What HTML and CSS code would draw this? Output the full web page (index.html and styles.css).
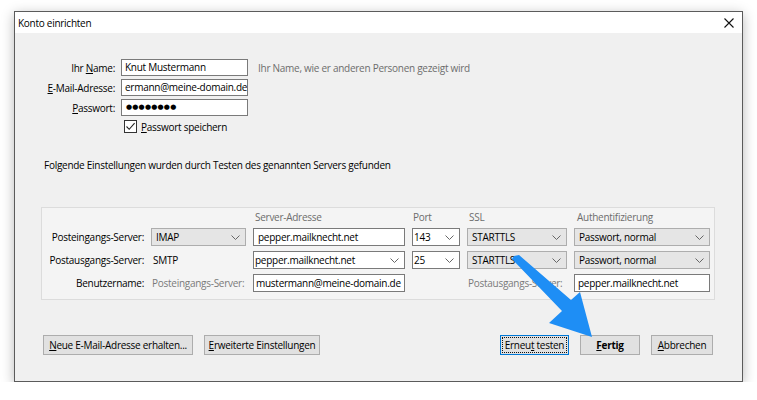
FILE: index.html
```html
<!DOCTYPE html>
<html lang="de">
<head>
  <meta charset="UTF-8">
  <title>Konto einrichten</title>
  <link rel="stylesheet" href="styles.css">
</head>
<body>

<div class="dialog">
  <div class="titlebar">
    <span class="title">Konto einrichten</span>
    <svg class="close" width="10" height="10" viewBox="0 0 10 10"><path d="M0.5 0.5 L9.5 9.5 M9.5 0.5 L0.5 9.5" stroke="#111" stroke-width="1.1" fill="none"/></svg>
  </div>

  <div class="content">
    <!-- Konto-Daten -->
    <div class="account">
      <span class="lbl">Ihr <u>N</u>ame:</span>
      <div class="field">Knut Mustermann</div>
      <span class="hint">Ihr Name, wie er anderen Personen gezeigt wird</span>

      <span class="lbl"><u>E</u>-Mail-Adresse:</span>
      <div class="field">ermann@meine-domain.de</div>
      <span></span>

      <span class="lbl"><u>P</u>asswort:</span>
      <div class="field pass">●●●●●●●●</div>
      <span></span>

      <div class="remember">
        <span class="checkbox"><svg width="11" height="11" viewBox="0 0 11 11"><path d="M1.5 5.5 L4.2 8.3 L9.6 2.2" stroke="#222" stroke-width="1.1" fill="none"/></svg></span>
        <span><u>P</u>asswort speichern</span>
      </div>
    </div>

    <p class="found">Folgende Einstellungen wurden durch Testen des genannten Servers gefunden</p>

    <!-- Server-Einstellungen -->
    <div class="servers">
      <span></span>
      <span></span>
      <span class="head">Server-Adresse</span>
      <span class="head port-head">Port</span>
      <span class="head">SSL</span>
      <span class="head auth-head">Authentifizierung</span>

      <span class="lbl">Posteingangs-Server:</span>
      <div class="select">IMAP<svg class="chev" width="9" height="5" viewBox="0 0 9 5"><path d="M0.5 0.5 L4.5 4.5 L8.5 0.5" stroke="#666" fill="none"/></svg></div>
      <div class="field wide">pepper.mailknecht.net</div>
      <div class="combo">143<svg class="chev" width="9" height="5" viewBox="0 0 9 5"><path d="M0.5 0.5 L4.5 4.5 L8.5 0.5" stroke="#666" fill="none"/></svg></div>
      <div class="select">STARTTLS<svg class="chev" width="9" height="5" viewBox="0 0 9 5"><path d="M0.5 0.5 L4.5 4.5 L8.5 0.5" stroke="#666" fill="none"/></svg></div>
      <div class="select">Passwort, normal<svg class="chev" width="9" height="5" viewBox="0 0 9 5"><path d="M0.5 0.5 L4.5 4.5 L8.5 0.5" stroke="#666" fill="none"/></svg></div>

      <span class="lbl">Postausgangs-Server:</span>
      <span class="plain">SMTP</span>
      <div class="combo">pepper.mailknecht.net<svg class="chev" width="9" height="5" viewBox="0 0 9 5"><path d="M0.5 0.5 L4.5 4.5 L8.5 0.5" stroke="#666" fill="none"/></svg></div>
      <div class="combo">25<svg class="chev" width="9" height="5" viewBox="0 0 9 5"><path d="M0.5 0.5 L4.5 4.5 L8.5 0.5" stroke="#666" fill="none"/></svg></div>
      <div class="select">STARTTLS<svg class="chev" width="9" height="5" viewBox="0 0 9 5"><path d="M0.5 0.5 L4.5 4.5 L8.5 0.5" stroke="#666" fill="none"/></svg></div>
      <div class="select">Passwort, normal<svg class="chev" width="9" height="5" viewBox="0 0 9 5"><path d="M0.5 0.5 L4.5 4.5 L8.5 0.5" stroke="#666" fill="none"/></svg></div>

      <span class="lbl">Benutzername:</span>
      <span class="muted">Posteingangs-Server:</span>
      <div class="field user">mustermann@meine-domain.de</div>
      <span></span>
      <span class="muted">Postausgangs-Server:</span>
      <div class="field">pepper.mailknecht.net</div>
    </div>

    <div class="actions">
      <div class="group">
        <button class="btn btn-new"><u>N</u>eue E-Mail-Adresse erhalten...</button>
        <button class="btn btn-adv"><u>E</u>rweiterte Einstellungen</button>
      </div>
      <div class="group">
        <button class="btn btn-retest">Erneu<u>t</u> testen</button>
        <button class="btn btn-done"><u>F</u>ertig</button>
        <button class="btn btn-cancel"><u>A</u>bbrechen</button>
      </div>
    </div>
  </div>
</div>

<!-- Hinweispfeil -->
<svg class="arrow" width="757" height="400" viewBox="0 0 757 400">
  <polygon points="514,256 519,255 571,300 580,292 592,337 549,323 562,311 512,259" fill="#1e8ef5"/>
</svg>

</body>
</html>
```

FILE: styles.css
```css
body {
  margin: 0;
  background-color: #fff;
  font-family: "Open Sans", sans-serif;
  font-size: 10px;
  letter-spacing: -0.27px;
  color: #000;
}

.dialog {
  margin: 11px 0 0 14px;
  width: 727px;
  border: 1px solid #5b5b5b;
  background-color: #f0f0f0;
  box-shadow: 0 3px 12px rgba(0,0,0,0.28);
}

.titlebar {
  height: 21px;
  background-color: #fff;
  display: flex;
  align-items: center;
  justify-content: space-between;
  padding: 0 8px 0 3px;
}

.title {
  font-size: 10px;
}

.content {
  padding: 26px 0 26px 0;
}

u {
  text-decoration: underline;
  text-underline-offset: 1px;
}

.account {
  display: grid;
  grid-template-columns: 100px 127px auto;
  grid-template-rows: 17px 17px 17px 15px;
  column-gap: 6px;
  row-gap: 3px;
  align-items: center;
}

.lbl {
  text-align: right;
  white-space: nowrap;
}

.field {
  height: 17px;
  box-sizing: border-box;
  border: 1px solid #7a7a7a;
  background-color: #fff;
  padding: 0 3px;
  line-height: 15px;
  white-space: nowrap;
  overflow: hidden;
}

.pass {
  font-family: "DejaVu Sans", sans-serif;
  font-size: 7px;
  letter-spacing: 0.2px;
  padding-left: 4px;
}

.hint {
  color: #6d6d6d;
  margin-left: 4px;
}

.remember {
  grid-column: 2 / 4;
  display: flex;
  align-items: center;
  gap: 4px;
  padding-left: 3px;
}

.checkbox {
  width: 13px;
  height: 13px;
  box-sizing: border-box;
  border: 1px solid #333;
  background-color: #fff;
  display: flex;
  align-items: center;
  justify-content: center;
}

.found {
  margin: 23px 0 0 29px;
  line-height: 16px;
}

.servers {
  margin: 34px 27px 0 26px;
  border: 1px solid #dcdcdc;
  background-color: #f4f4f4;
  padding: 3px 4px 7px 4px;
  display: grid;
  grid-template-columns: 98px 95px 152px 48px 100px 136px;
  grid-template-rows: 12px 18px 18px 18px;
  column-gap: 7px;
  row-gap: 5px;
  align-items: center;
}

.servers .field {
  height: 18px;
  line-height: 16px;
}

.servers .wide {
  padding-left: 4px;
}

.servers .user {
  padding-left: 2px;
}

.head {
  color: #6d6d6d;
  padding-left: 2px;
}

.port-head {
  padding-left: 1px;
}

.auth-head {
  padding-left: 3px;
}

.select, .combo {
  height: 18px;
  box-sizing: border-box;
  display: flex;
  align-items: center;
  justify-content: space-between;
  white-space: nowrap;
}

.select {
  border: 1px solid #adadad;
  background-color: #e5e5e5;
  padding: 0 5px 0 4px;
}

.combo {
  border: 1px solid #7a7a7a;
  background-color: #fff;
  padding: 0 5px 0 1px;
}

.plain {
  padding-left: 2px;
}

.muted {
  color: #7a7a7a;
  padding-left: 1px;
  white-space: nowrap;
}

.actions {
  margin: 35px 29px 0 28px;
  display: flex;
  justify-content: space-between;
}

.group {
  display: flex;
  gap: 11px;
}

.btn {
  height: 20px;
  box-sizing: border-box;
  border: 1px solid #adadad;
  background-color: #e1e1e1;
  font-family: "Open Sans", sans-serif;
  font-size: 10px;
  letter-spacing: -0.27px;
  color: #000;
  padding: 0;
  margin: 0;
}

.btn-new { width: 150px; }
.btn-adv { width: 116px; }
.btn-retest {
  width: 69px;
  border-color: #0078d7;
  outline: 1px dotted #111;
  outline-offset: -3px;
}
.btn-done {
  width: 60px;
  font-weight: bold;
}
.btn-cancel { width: 62px; }

.arrow {
  position: absolute;
  left: 0;
  top: 0;
  pointer-events: none;
}
```
